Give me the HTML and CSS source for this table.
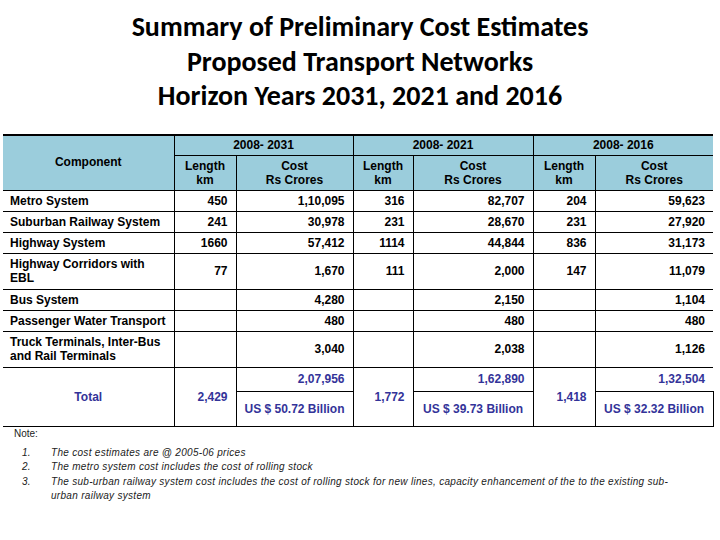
FILE: index.html
```html
<!DOCTYPE html>
<html>
<head>
<meta charset="utf-8">
<link rel="stylesheet" href="styles.css">
</head>
<body>
<h1 class="title">Summary of Preliminary Cost Estimates<br>Proposed Transport Networks<br>Horizon Years 2031, 2021 and 2016</h1>
<table class="cost">
  <colgroup>
    <col class="c-comp"><col class="c-len"><col class="c-cost"><col class="c-len2"><col class="c-cost2"><col class="c-len"><col class="c-cost3">
  </colgroup>
  <thead>
    <tr class="h1">
      <th rowspan="2" class="comp-h">Component</th>
      <th colspan="2">2008- 2031</th>
      <th colspan="2">2008- 2021</th>
      <th colspan="2">2008- 2016</th>
    </tr>
    <tr class="h2">
      <th>Length<br>km</th><th>Cost<br>Rs Crores</th>
      <th>Length<br>km</th><th>Cost<br>Rs Crores</th>
      <th>Length<br>km</th><th>Cost<br>Rs Crores</th>
    </tr>
  </thead>
  <tbody>
    <tr class="r1"><td class="name">Metro System</td><td>450</td><td>1,10,095</td><td>316</td><td>82,707</td><td>204</td><td>59,623</td></tr>
    <tr class="r1"><td class="name">Suburban Railway System</td><td>241</td><td>30,978</td><td>231</td><td>28,670</td><td>231</td><td>27,920</td></tr>
    <tr class="r1"><td class="name">Highway System</td><td>1660</td><td>57,412</td><td>1114</td><td>44,844</td><td>836</td><td>31,173</td></tr>
    <tr class="r2"><td class="name">Highway Corridors with EBL</td><td>77</td><td>1,670</td><td>111</td><td>2,000</td><td>147</td><td>11,079</td></tr>
    <tr class="r1"><td class="name">Bus System</td><td></td><td>4,280</td><td></td><td>2,150</td><td></td><td>1,104</td></tr>
    <tr class="r1"><td class="name">Passenger Water Transport</td><td></td><td>480</td><td></td><td>480</td><td></td><td>480</td></tr>
    <tr class="r2"><td class="name">Truck Terminals, Inter-Bus and Rail Terminals</td><td></td><td>3,040</td><td></td><td>2,038</td><td></td><td>1,126</td></tr>
    <tr class="t1 total">
      <td rowspan="2" class="tot-name">Total</td>
      <td rowspan="2">2,429</td><td>2,07,956</td>
      <td rowspan="2">1,772</td><td>1,62,890</td>
      <td rowspan="2">1,418</td><td>1,32,504</td>
    </tr>
    <tr class="t2 total">
      <td class="usd">US $ 50.72 Billion</td>
      <td class="usd">US $ 39.73 Billion</td>
      <td class="usd last">US $ 32.32 Billion</td>
    </tr>
  </tbody>
</table>
<div class="notes">
  <div class="note-h">Note:</div>
  <ol class="note-list">
    <li><span class="num">1.</span><span>The cost estimates are @ 2005-06 prices</span></li>
    <li><span class="num">2.</span><span>The metro system cost includes the cost of rolling stock</span></li>
    <li><span class="num">3.</span><span>The sub-urban railway system cost includes the cost of rolling stock for new lines, capacity enhancement of the to the existing sub-urban railway system</span></li>
  </ol>
</div>
</body>
</html>
```
FILE: styles.css
```css
html, body { margin: 0; padding: 0; background: #fff; }
body { width: 720px; height: 540px; overflow: hidden; }

.title {
  margin: 10px 0 0 0;
  text-align: center;
  font-family: Carlito, Lato, "Open Sans", sans-serif;
  font-weight: bold;
  font-size: 28px;
  line-height: 34.5px;
  color: #000;
}

.cost {
  margin: 20px 0 0 3px;
  width: 710px;
  border-collapse: collapse;
  table-layout: fixed;
  font-family: "Liberation Sans", Arial, sans-serif;
  font-weight: bold;
  font-size: 12px;
  color: #000;
}
.c-comp { width: 171px; }
.c-len { width: 62px; }
.c-cost { width: 117px; }
.c-len2 { width: 60px; }
.c-cost2 { width: 120px; }
.c-cost3 { width: 118px; }

.cost th, .cost td {
  border: 1px solid #000;
  padding: 0;
}
.cost tr > :first-child { border-left: none; }
.cost tr > :last-child { border-right: none; }
.cost thead tr.h1 th { border-top: 2px solid #000; }

.cost th {
  background: #9bcddc;
  font-weight: bold;
  text-align: center;
  line-height: 14px;
}
.h1 th { height: 19px; }
.h2 th { height: 34px; }
.cost th.comp-h { padding-bottom: 2px; }

.cost td {
  text-align: right;
  padding-right: 8px;
  line-height: 14px;
  vertical-align: middle;
}
.cost td.name {
  text-align: left;
  padding-left: 7px;
  padding-right: 4px;
}
.r1 td { height: 20px; }
.r2 td { height: 35px; }

.total td { color: #333399; }
.t1 td { height: 23px; }
.t2 td { height: 34px; }
.cost td.tot-name { text-align: center; padding: 0; }
.cost td.usd { text-align: center; padding: 0; }
.cost td.usd.last { border-right: 1px solid #000; }

.notes {
  font-family: "Liberation Sans", Arial, sans-serif;
  font-size: 10px;
  color: #222;
  margin-top: 0;
}
.note-h { padding-left: 14px; line-height: 13px; margin-top: 0; }
.note-list {
  list-style: none;
  margin: 6px 0 0 0;
  padding: 0 34px 0 22px;
  font-style: italic;
  letter-spacing: 0.3px;
}
.note-list li {
  display: flex;
  line-height: 14.5px;
}
.note-list .num { flex: 0 0 29px; }
```
